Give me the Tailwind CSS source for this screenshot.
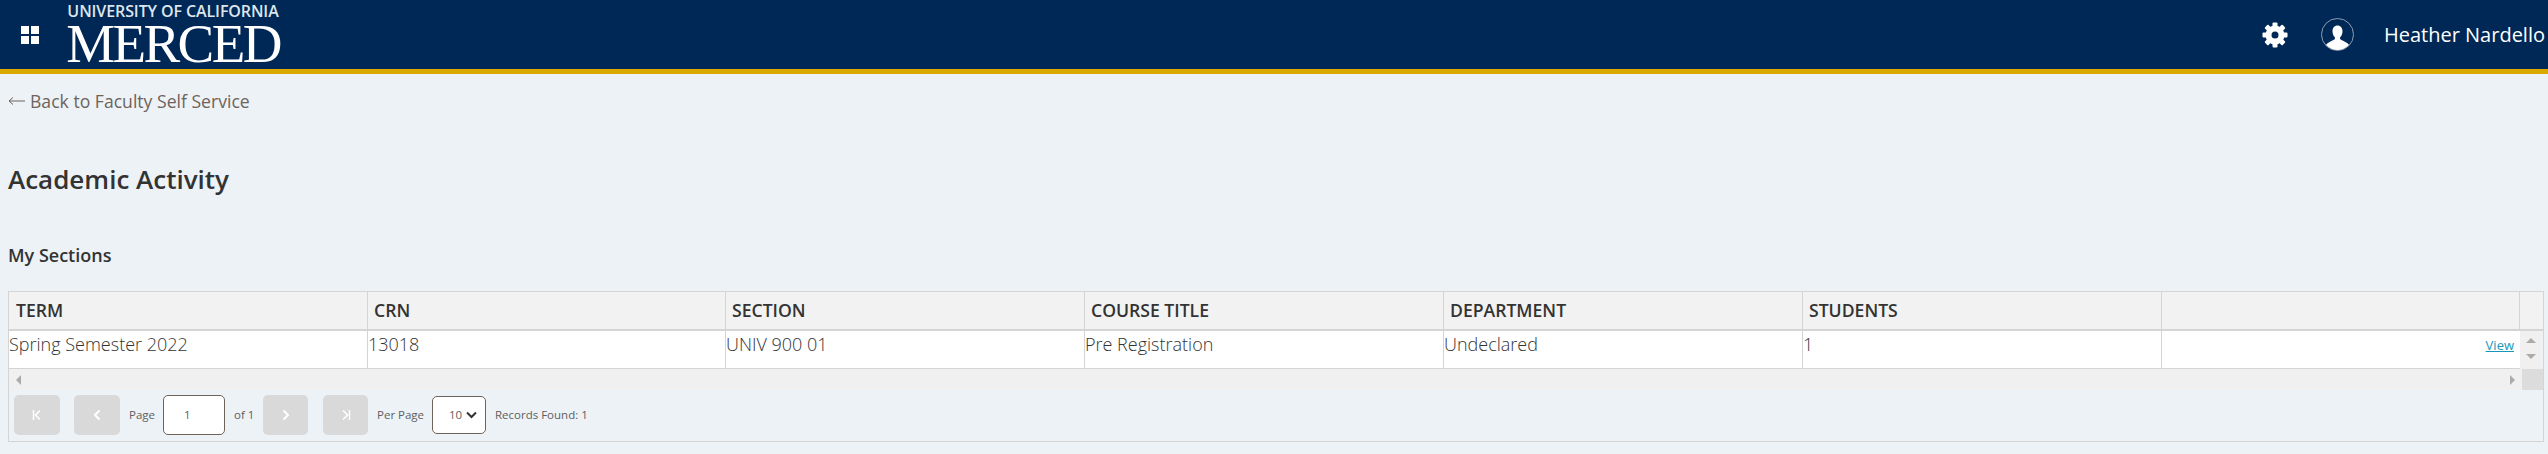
<!DOCTYPE html>
<html lang="en">
<head>
  <meta charset="UTF-8" />
  <title>Academic Activity</title>
  <script src="https://cdn.jsdelivr.net/npm/@tailwindcss/browser@4"></script>
</head>
<body class="bg-[#edf2f7] font-['Open_Sans',sans-serif] text-[#333] h-[454px] overflow-hidden">

  <!-- Top bar -->
  <header class="h-[74px] bg-[#002856] border-b-[5px] border-[#daa900] flex items-center">
    <button class="ml-[21px] w-[18px] h-[18px] grid grid-cols-2 gap-[2px] shrink-0">
      <span class="bg-white w-[8px] h-[8px]"></span>
      <span class="bg-white w-[8px] h-[8px]"></span>
      <span class="bg-white w-[8px] h-[8px]"></span>
      <span class="bg-white w-[8px] h-[8px]"></span>
    </button>
    <div class="ml-[28px] w-[212px] h-[69px] flex flex-col items-center">
      <div class="text-[16px] leading-[16px] mt-[3px] text-[#dfe5ec] font-semibold tracking-[-0.1px] whitespace-nowrap">UNIVERSITY OF CALIFORNIA</div>
      <div class="font-['Liberation_Serif',serif] text-[55px] leading-[38px] mt-[6px] text-white tracking-[-2.6px] whitespace-nowrap">MERCED</div>
    </div>
    <div class="ml-auto flex items-center">
      <svg class="w-[26px] h-[26px]" viewBox="-13 -13 26 26" fill="#fff">
        <circle r="6.500" fill="none" stroke="#fff" stroke-width="6"/>
        <rect x="-2.500" y="-12.500" width="5" height="5" rx="1"/>
        <rect x="-2.500" y="-12.500" width="5" height="5" rx="1" transform="rotate(45)"/>
        <rect x="-2.500" y="-12.500" width="5" height="5" rx="1" transform="rotate(90)"/>
        <rect x="-2.500" y="-12.500" width="5" height="5" rx="1" transform="rotate(135)"/>
        <rect x="-2.500" y="-12.500" width="5" height="5" rx="1" transform="rotate(180)"/>
        <rect x="-2.500" y="-12.500" width="5" height="5" rx="1" transform="rotate(225)"/>
        <rect x="-2.500" y="-12.500" width="5" height="5" rx="1" transform="rotate(270)"/>
        <rect x="-2.500" y="-12.500" width="5" height="5" rx="1" transform="rotate(315)"/>
      </svg>
      <svg class="ml-[33px] w-[33px] h-[33px]" viewBox="0 0 33 33">
        <circle cx="16.5" cy="16.5" r="16" fill="none" stroke="#8e9db0" stroke-width="1"/>
        <path d="M16.5 7.500c3 0 5 2.400 5 5.800 0 2.600-1 4.700-2.400 6v1.500c0 1 4 2 7.400 4.500.8.600 1.300 1.300 1.500 1.800a16 16 0 0 1-23 0c.2-.5.700-1.200 1.500-1.800 3.400-2.500 7.400-3.500 7.400-4.500v-1.500c-1.400-1.300-2.400-3.400-2.400-6 0-3.400 2-5.800 5-5.800z" fill="#fff"/>
      </svg>
      <span class="ml-[30px] mr-[3px] text-[20px] text-white whitespace-nowrap">Heather Nardello</span>
    </div>
  </header>

  <main class="px-[8px]">
    <a class="flex items-center mt-[14px] text-[17.600px] leading-[26px] text-[#6e635b] whitespace-nowrap">
      <svg class="mr-[5px]" width="17" height="10" viewBox="0 0 17 10" fill="none" stroke="#6e635b" stroke-width="1"><path d="M17 5H1M5 1.500 1 5l4 3.500"/></svg>
      Back to Faculty Self Service</a>
    <h1 class="mt-[49px] text-[26px] leading-[32px] font-semibold text-[#333]">Academic Activity</h1>
    <h2 class="mt-[48px] text-[18px] leading-[24px] font-semibold text-[#333]">My Sections</h2>

    <!-- Sections grid -->
    <section class="mt-[24px] w-[2536px] h-[151px] border border-[#d4d4d4] bg-[#edf2f7] flex flex-col">
      <div class="flex h-[39px] bg-[#f2f2f2] border-b-2 border-[#d4d4d4] text-[17.600px] font-semibold text-[#333] shrink-0">
        <div class="w-[359px] border-r border-[#d4d4d4] pl-[7px] leading-[37px]">TERM</div>
        <div class="w-[358px] border-r border-[#d4d4d4] pl-[6px] leading-[37px]">CRN</div>
        <div class="w-[359px] border-r border-[#d4d4d4] pl-[6px] leading-[37px]">SECTION</div>
        <div class="w-[359px] border-r border-[#d4d4d4] pl-[6px] leading-[37px]">COURSE TITLE</div>
        <div class="w-[359px] border-r border-[#d4d4d4] pl-[6px] leading-[37px]">DEPARTMENT</div>
        <div class="w-[359px] border-r border-[#d4d4d4] pl-[6px] leading-[37px]">STUDENTS</div>
        <div class="w-[358px] border-r border-[#d4d4d4]"></div>
        <div class="flex-1"></div>
      </div>
      <div class="flex h-[38px] shrink-0">
        <div class="flex w-[2511px] bg-white border-b border-[#d4d4d4] text-[18px] font-light text-[#333] leading-[26px]">
          <div class="w-[359px] border-r border-[#d4d4d4]">Spring Semester 2022</div>
          <div class="w-[358px] border-r border-[#d4d4d4]">13018</div>
          <div class="w-[359px] border-r border-[#d4d4d4]">UNIV 900 01</div>
          <div class="w-[359px] border-r border-[#d4d4d4]">Pre Registration</div>
          <div class="w-[359px] border-r border-[#d4d4d4]">Undeclared</div>
          <div class="w-[359px] border-r border-[#d4d4d4]">1</div>
          <div class="flex-1 text-right pr-[6px] pt-[1px] text-[13px] font-normal"><a class="text-[#1797b8] underline">View</a></div>
        </div>
        <div class="w-[21px] bg-[#f0f0f0] flex flex-col items-center gap-[11px] pt-[7px]">
          <span class="w-0 h-0 border-x-[5px] border-x-transparent border-b-[5px] border-b-[#ababab]"></span>
          <span class="w-0 h-0 border-x-[5px] border-x-transparent border-t-[5px] border-t-[#ababab]"></span>
        </div>
      </div>
      <div class="flex h-[21px] bg-[#f0f0f0] shrink-0">
        <div class="flex-1 flex items-center justify-between px-[7px]">
          <span class="w-0 h-0 border-y-[5px] border-y-transparent border-r-[5px] border-r-[#ababab]"></span>
          <span class="w-0 h-0 border-y-[5px] border-y-transparent border-l-[5px] border-l-[#ababab]"></span>
        </div>
        <div class="w-[21px] bg-[#dcdcdc]"></div>
      </div>

      <!-- Pager -->
      <div class="flex-1 flex items-center text-[11.500px] text-[#5e5e5e] pl-[5px] pb-[2px] whitespace-nowrap">
        <button class="w-[46px] h-[40px] rounded-[5px] bg-[#d9d9d9] flex items-center justify-center">
          <svg width="10" height="12" viewBox="0 0 10 12" fill="none" stroke="#fff" stroke-width="1.500"><path d="M1.500 1v10M8 1.500 3.500 6 8 10.500"/></svg>
        </button>
        <button class="ml-[14px] w-[46px] h-[40px] rounded-[5px] bg-[#d9d9d9] flex items-center justify-center">
          <svg width="8" height="12" viewBox="0 0 8 12" fill="none" stroke="#fff" stroke-width="2"><path d="M6.500 1.500 2 6l4.500 4.500"/></svg>
        </button>
        <span class="ml-[9px] w-[34px]">Page</span>
        <div class="w-[62px] h-[40px] bg-white border border-[#6e635b] rounded-[5px] pl-[20px] leading-[38px]">1</div>
        <span class="ml-[9px] w-[29px]">of 1</span>
        <button class="w-[45px] h-[40px] rounded-[5px] bg-[#d9d9d9] flex items-center justify-center">
          <svg width="8" height="12" viewBox="0 0 8 12" fill="none" stroke="#fff" stroke-width="2"><path d="M1.500 1.500 6 6l-4.500 4.500"/></svg>
        </button>
        <button class="ml-[15px] w-[45px] h-[40px] rounded-[5px] bg-[#d9d9d9] flex items-center justify-center">
          <svg width="10" height="12" viewBox="0 0 10 12" fill="none" stroke="#fff" stroke-width="1.500"><path d="M2 1.500 6.500 6 2 10.500M8.500 1v10"/></svg>
        </button>
        <span class="ml-[9px] w-[55px]">Per Page</span>
        <div class="w-[54px] h-[38px] bg-white border border-[#6e635b] rounded-[5px] flex items-center pl-[16px] gap-[4px]">
          <span>10</span>
          <svg width="11" height="8" viewBox="0 0 11 8" fill="none" stroke="#333" stroke-width="2"><path d="M1 1.500 5.500 6 10 1.500"/></svg>
        </div>
        <span class="ml-[9px]">Records Found: 1</span>
      </div>
    </section>
  </main>
</body>
</html>
